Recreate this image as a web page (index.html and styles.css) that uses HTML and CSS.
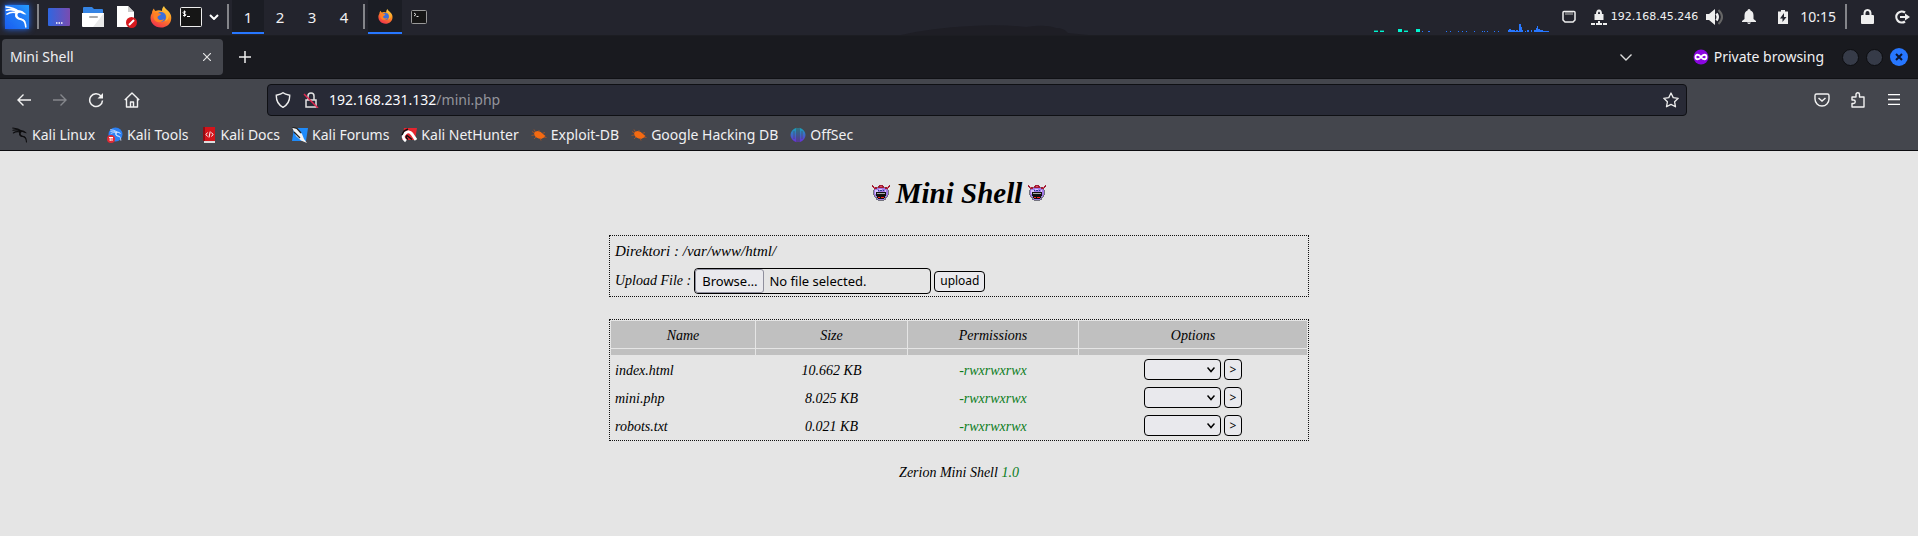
FILE: index.html
```
<!DOCTYPE html>
<html lang="en">
<head>
<meta charset="utf-8">
<title>Mini Shell</title>
<link rel="stylesheet" href="styles.css">
</head>
<body>
<svg class="defs" aria-hidden="true">
  <defs>
    <linearGradient id="gKali" x1="0" y1="1" x2="1" y2="0"><stop offset="0" stop-color="#1a5cf0"/><stop offset="1" stop-color="#259cff"/></linearGradient>
    <linearGradient id="gDesk" x1="0" y1="0" x2="1" y2="0"><stop offset="0" stop-color="#2f66e0"/><stop offset="1" stop-color="#7a4cb0"/></linearGradient>
    <linearGradient id="gFox" x1="0.8" y1="0" x2="0.3" y2="1"><stop offset="0" stop-color="#ffe14a"/><stop offset=".45" stop-color="#ff8a20"/><stop offset="1" stop-color="#f0304e"/></linearGradient>
    <linearGradient id="gOff" x1="0" y1="0" x2="0" y2="1"><stop offset="0" stop-color="#16a5b8"/><stop offset="1" stop-color="#6a2bd8"/></linearGradient>
    <symbol id="dragon" viewBox="0 0 24 24">
      <path d="M1 1.500C6 2 10 2.500 14 6M1.500 5c4-1.200 8-.800 11 1.500M2 9c3-2 6.500-2.500 10-1.500M12 8c-2 4 1 6 4 6.300 4 .500 5.500 3.200 5.700 8.200" fill="none" stroke="currentColor" stroke-width="1.600" stroke-linecap="round"/>
      <path d="M11 5.500c3-1 6-.500 8 1l3.500 3-3-.500-3-1.300c-2.500-.200-3.500.800-3.500 2.300 0 2 2 3 4.500 3.500 2.500.700 4 2.500 4.300 5-2-3-3.500-3.300-6-3.800-3.500-.700-5.500-3-5-5.700z" fill="currentColor"/>
    </symbol>
    <symbol id="fox" viewBox="0 0 22 22">
      <path d="M2 7C2 5 3 3.500 4 2.500c0 1.300.800 1.800 1.500 2.500C7.500 4 10 4 12 5c0-2 .500-3.500 2-5 .500 3 5.500 4.500 7 9.500 1.500 7-3.500 12-10 12S.500 17 .500 11.500C.500 10 1 8.500 2 7z" fill="url(#gFox)"/>
      <circle cx="11" cy="11" r="5" fill="#3a6fdc"/>
      <path d="M4 8c2-1.500 5-1.500 7 0-1 2-3.500 1.500-3.500 3.500 0 2.500 4 3.500 6.500 1.500-1 4-8 4.500-10 0C3.300 11.500 3.300 9.500 4 8z" fill="#ff8124"/>
      <path d="M12 5c3 0 4.500 3 4.500 6 0 2-1 3.500-2 4.500 4-1 5.500-6 3-9C16 4 13 5 12 5z" fill="#ffb52e"/>
    </symbol>
    <symbol id="bug" viewBox="0 0 16 16">
      <path d="M3 6q1-2 4-2 3 .500 5 3l2.500 2-1.500 1.500-3 1.500Q5 11 3.500 8.500z" fill="#f36a12"/>
      <path d="M4.500 5L3 2.500M8 5V3M3 8L.5 8.500M5 10l-2 2M9 11l1 2.500M11 6.500l3-1M3.500 6L1 4.500M13 10l2.500.5" fill="none" stroke="#b5541f" stroke-width=".8"/>
    </symbol>
    <symbol id="imp" viewBox="0 0 18 16" shape-rendering="crispEdges">
      <path d="M4 2h10v1h1v1h1v1h1v5h-1v2h-1v1h-1v2h-2v1H6v-1H4v-2H3v-1H2v-2H1V5h1V4h1V3h1z" fill="#74747e"/>
      <path d="M5 3h8v1h2v1h1v5h-1v2h-2v2h-1v1H6v-1H5v-2H3v-2H2V5h1V4h2z" fill="#a27ae6"/>
      <path d="M3 5h3v2H5v2H3zM7 4h3v1H7zM13 5h1v2h-1z" fill="#d8c6ff"/>
      <path d="M0 0h1v1h1v1h3v2H2V3H1V2H0zM18 0h-1v1h-1v1h-3v2h3V3h1V2h1zM7 0h4v1h1v2H6V1h1z" fill="#a01c34"/>
      <path d="M2 2h1v1H2zM15 2h1v1h-1zM8 1h2v1H8z" fill="#e04c66"/>
      <path d="M6 5h1v1H6zM8 5h2v1H8zM11 5h1v1h-1z" fill="#283c98"/>
      <path d="M4 7h10v4h-1v2h-1v1H6v-1H5v-2H4z" fill="#111"/>
      <path d="M5 8h8v1H5z" fill="#aaa"/><path d="M6 12h2v1H6zM9 12h3v1H9z" fill="#f22"/>
    </symbol>
  </defs>
</svg>

<header class="panel">
  <svg class="hill" width="190" height="10"><path d="M0 10Q30 3 70 1q30-2 55 1 20-3 30 1 8 0 12 5l20 2z" fill="#1e1e25"/></svg>
  <button class="menu" aria-label="Applications"><svg width="26" height="26" viewBox="0 0 26 26"><rect x="1" y="1" width="24" height="24" fill="url(#gKali)"/><svg x="1" y="1" width="23" height="24" color="#fff"><use href="#dragon"/></svg></svg></button>
  <span class="sep"></span>
  <button class="launch" aria-label="Show desktop"><svg width="22" height="18"><rect width="22" height="18" rx="1" fill="url(#gDesk)"/><path d="M8 15h1.500M10.500 15H12M13 15h1.500" stroke="#fff" stroke-width="1.500"/></svg></button>
  <button class="launch" aria-label="Files"><svg width="22" height="20"><path d="M1 1q0-1 1-1h8l2 2h8q1 0 1 1v4H1z" fill="#3584e4"/><path d="M0 6h22v13q0 1-1 1H1q-1 0-1-1z" fill="#fff"/><path d="M22 6v14H11z" fill="#e9e9e9"/><rect x="7" y="9" width="9" height="2" rx="1" fill="#aaa"/></svg></button>
  <button class="launch" aria-label="Text editor"><svg width="22" height="22"><path d="M1 0h11l6 6v15H1z" fill="#fff"/><path d="M12 0l6 6h-6z" fill="#ccc"/><circle cx="15.500" cy="16.500" r="5.500" fill="#d7191e"/><path d="M13 19l5-5" stroke="#fff" stroke-width="2"/></svg></button>
  <button class="launch" aria-label="Firefox"><svg width="22" height="22"><use href="#fox"/></svg></button>
  <button class="term" aria-label="Terminal"><svg width="22" height="20"><rect x=".5" y=".5" width="21" height="19" rx="1" fill="#161616" stroke="#eee"/><path d="M6 5q-3-1-3 .7c0 1.300 3 .8 3 2.300q-.5 1.300-3 .5M4.500 3.500v6M7 9.500h3" fill="none" stroke="#fff"/></svg></button>
  <button class="more" aria-label="More terminals"><svg width="10" height="6"><path d="M1 1l4 4 4-4" fill="none" stroke="#fff" stroke-width="2"/></svg></button>
  <span class="sep"></span>
  <nav class="spaces"><button class="space on">1</button><button class="space">2</button><button class="space">3</button><button class="space">4</button></nav>
  <span class="sep"></span>
  <button class="task on" aria-label="Firefox window"><svg width="15" height="15"><use href="#fox"/></svg></button>
  <button class="task" aria-label="Terminal window"><svg width="16" height="14"><rect x=".5" y=".5" width="15" height="13" rx="1" fill="#161616" stroke="#999"/><path d="M3 3l2 1.500L3 6M5.500 6.500h2" fill="none" stroke="#ddd"/></svg></button>
  <svg class="graph" width="178" height="9" shape-rendering="crispEdges"><path d="M0 7h4v1H0zM6 7h4v1H6zM24 5h4v3h-4zM30 7h4v1h-4zM42 5h4v3h-4z" fill="#00f5d0"/><path d="M0 6h4v1H0zM6 6h4v1H6zM30 6h4v1h-4z" fill="#14786f"/><path d="M48 7h1v1h-1zM54 7h2v1h-2zM72 7h1v1h-1zM76 7h1v1h-1zM84 7h1v1h-1zM88 7h1v1h-1zM92 7h1v1h-1zM100 7h1v1h-1zM108 7h1v1h-1zM110 7h1v1h-1zM113 7h1v1h-1zM120 7h1v1h-1zM124 7h1v1h-1zM134 6h1V5h2v1h4v1h1V6h2v1h1V0h2v3h1v3h1v2h-15zM151 7h1v1h-1zM153 6h2v2h-2zM157 6h1v2h-1zM160 6h2V4h1V2h1v3h2v1h3v1h6v1h-15z" fill="#2777ff"/></svg>
  <div class="tray">
    <svg class="net" width="14" height="14"><path d="M2 1.500h10q1 0 1 1V10l-2 2H3l-2-2V2.500q0-1 1-1z" fill="none" stroke="#eee" stroke-width="1.500"/><path d="M4 2v3M6 2v3M8 2v3M10 2v3" stroke="#bbb"/></svg>
    <svg width="16" height="16"><path d="M5 5q0-4.500 3-4.500T11 5h1.500v6h-9V5zM7 5h2q0-2.500-1-2.500T7 5z" fill="#eee"/><path d="M0 14h4v2H0zM5 14h6v2H5zM12 14h4v2h-4zM7 12h2v2H7z" fill="#eee"/></svg>
    <span class="ip">192.168.45.246</span>
    <svg class="vol" width="18" height="16"><path d="M0 5h3l6-5v16l-6-5H0z" fill="#eee"/><path d="M10.500 4.500Q13 8 10.500 11.500" fill="none" stroke="#eee" stroke-width="2.500"/><path d="M12.500 1q7 7 0 14" fill="none" stroke="#666" stroke-width="2"/></svg>
    <svg class="bell" width="14" height="15"><path d="M7 0q1.500 0 1.500 1.500 3 1 3 5V10L14 12v1H0v-1l2.500-2V6.500q0-4 3-5Q5.500 0 7 0zM5 13.500h4Q8 15 7 15t-2-1.500z" fill="#eee"/></svg>
    <svg class="batt" width="10" height="14"><path d="M3 0h4v1.500h3V14H0V1.500h3z" fill="#eee"/><path d="M6 3L2 8.500h2.500V12L8.500 7H6z" fill="#23252e"/></svg>
    <time class="clock">10:15</time>
    <span class="sep"></span>
    <svg class="lock" width="13" height="15"><path d="M1 6h1.500q-.5-6 4-6t4 6H12q1 0 1 1v7q0 1-1 1H1q-1 0-1-1V7q0-1 1-1zM4.500 6h4q.300-4-2-4t-2 4z" fill="#eee"/></svg>
    <svg class="exit" width="15" height="14"><path d="M10 2.500A5.500 5.500 0 1 0 10 11.500" fill="none" stroke="#eee" stroke-width="2.200"/><path d="M5 6h5V3.500L15 7l-5 3.500V8H5z" fill="#eee"/></svg>
  </div>
</header>

<div class="tabs">
  <div class="tab"><span>Mini Shell</span><button aria-label="Close tab"><svg width="8" height="8"><path d="M0 0l8 8M8 0L0 8" stroke="#e4e4e4" stroke-width="1.200"/></svg></button></div>
  <button class="new" aria-label="New tab"><svg width="12" height="12"><path d="M6 0v12M0 6h12" stroke="#eee" stroke-width="1.500"/></svg></button>
  <button class="all" aria-label="List tabs"><svg width="12" height="7"><path d="M.5.500L6 6l5.500-5.500" fill="none" stroke="#ddd" stroke-width="1.400"/></svg></button>
  <div class="private"><svg width="16" height="16"><circle cx="8" cy="8" r="7.500" fill="#8a06e0"/><path d="M8 8C6 5 2.500 5 2.500 8S6 11 8 8s5.500-3 5.500 0S10 11 8 8z" fill="none" stroke="#fff" stroke-width="1.800"/></svg><span>Private browsing</span></div>
  <div class="win"><button aria-label="Minimize"></button><button aria-label="Maximize"></button><button class="x" aria-label="Close"><svg width="8" height="8"><path d="M1 1l6 6M7 1L1 7" stroke="#0a1430" stroke-width="2"/></svg></button></div>
</div>

<div class="nav">
  <div class="tools">
    <button aria-label="Back"><svg width="16" height="16"><path d="M15 8H2M7.500 2.500L2 8l5.500 5.500" fill="none" stroke="#f2f2f2" stroke-width="1.400"/></svg></button>
    <button aria-label="Forward"><svg width="16" height="16"><path d="M1 8h13M8.500 2.500L14 8l-5.500 5.500" fill="none" stroke="#85878c" stroke-width="1.400"/></svg></button>
    <button aria-label="Reload"><svg width="16" height="16"><path d="M13 4A6.400 6.400 0 1 0 14.500 8.500" fill="none" stroke="#f2f2f2" stroke-width="1.500"/><path d="M15 1v5.500H9.500z" fill="#f2f2f2"/></svg></button>
    <button aria-label="Home"><svg width="16" height="16"><path d="M.8 8L8 1l7.200 7M2.500 6.500V15h11V6.500M6.500 15v-5h3v5" fill="none" stroke="#f2f2f2" stroke-width="1.400" stroke-linejoin="round"/></svg></button>
  </div>
  <div class="url">
    <svg width="16" height="16"><path d="M8 .7Q10 2.300 14.700 3.200 15 11.500 8 15.300 1 11.500 1.300 3.200 6 2.300 8 .7z" fill="none" stroke="#eee" stroke-width="1.400"/></svg>
    <svg class="insecure" width="16" height="16"><path d="M3 8h10v7H3zM5 8V4q0-3 3-3t3 3v4" fill="none" stroke="#e2e2e2" stroke-width="1.500"/><path d="M1 2l14 14" stroke="#e22850" stroke-width="1.500"/></svg>
    <a class="addr" href="#"><b>192.168.231.132</b>/mini.php</a>
    <button aria-label="Bookmark"><svg width="16" height="16"><path d="M8 1l2.200 4.600 5 .7-3.600 3.500.9 5L8 12.400l-4.500 2.400.9-5L.8 6.300l5-.7z" fill="none" stroke="#eee" stroke-width="1.300" stroke-linejoin="round"/></svg></button>
  </div>
  <div class="tools">
    <button aria-label="Pocket"><svg width="16" height="16"><path d="M2.500 2h11q1.500 0 1.500 1.500V7A7 7 0 0 1 1 7V3.500Q1 2 2.500 2z" fill="none" stroke="#f2f2f2" stroke-width="1.400"/><path d="M4.500 6L8 9l3.500-3" fill="none" stroke="#f2f2f2" stroke-width="1.500"/></svg></button>
    <button aria-label="Extensions"><svg width="16" height="16"><path d="M2 15V11.500h1.500a1.500 1.500 0 0 0 0-3.500H2V5h4V2.500a1.500 1.500 0 0 1 3.500 0V5H14v10z" fill="none" stroke="#f2f2f2" stroke-width="1.400" stroke-linejoin="round"/></svg></button>
    <button aria-label="Menu"><svg width="12" height="11"><path d="M0 .5h12M0 5.500h12M0 10.500h12" stroke="#fff" stroke-width="1.300"/></svg></button>
  </div>
</div>

<nav class="marks">
  <a href="#"><svg width="16" height="16" color="#0d0d0f"><use href="#dragon"/></svg>Kali Linux</a>
  <a href="#"><svg width="16" height="16"><circle cx="8.500" cy="7.500" r="7" fill="#2b80f4"/><svg x="3" y="2" width="12" height="12" color="#cfe2ff"><use href="#dragon"/></svg><circle cx="4" cy="12" r="4" fill="#e02a34"/><path d="M2 10.500h4M3.200 10.500v3.500M5 10.500v3.500" stroke="#fff"/></svg>Kali Tools</a>
  <a href="#"><svg width="16" height="16"><path d="M2 0h12v14H2z" fill="#d4141b"/><path d="M2 0h2v14H2z" fill="#8f0e14"/><path d="M3 14h11v2H3z" fill="#ddd"/><path d="M6.500 5.500L5 7.500l1.500 2M10.500 5.500l1.500 2-1.500 2M9.200 4.500L8 10.500" fill="none" stroke="#fff"/></svg>Kali Docs</a>
  <a href="#"><svg width="16" height="16"><path d="M2 1h14l-2 13H0z" fill="#1f8bfa"/><path d="M0 0l5 1.500 5 5.500 2 5 3 4-6-2.500-5-4.500z" fill="#f4f4f4"/><path d="M0 0l5 1.500L9 6M2 5l6 6" fill="none" stroke="#222" stroke-width="1.300"/></svg>Kali Forums</a>
  <a href="#"><svg width="16" height="16"><path d="M3 1h13l-2 12H1z" fill="#e5252f"/><path d="M5 14Q0 10 4 6.500T11 7l4 6" fill="none" stroke="#fff" stroke-width="3"/><path d="M7 12.500q-3-2-1-4l5 4M1 8l2-4 4-2" fill="none" stroke="#111" stroke-width="1.500"/></svg>Kali NetHunter</a>
  <a href="#"><svg width="16" height="16"><use href="#bug"/></svg>Exploit-DB</a>
  <a href="#"><svg width="16" height="16"><use href="#bug"/></svg>Google Hacking DB</a>
  <a href="#"><svg width="16" height="16"><path d="M6.500.8v14.400Q.5 13 .5 8t6-7.200zM9.500.8v14.400q6-2.200 6-7.200t-6-7.200zM7.500 1h1v14h-1z" fill="url(#gOff)"/><path d="M4 4v8M12 4v8" stroke="#45474e" stroke-width=".6"/></svg>OffSec</a>
</nav>

<main class="page">
  <h1><svg width="18" height="16"><use href="#imp"/></svg><span>Mini Shell</span><svg width="18" height="16"><use href="#imp"/></svg></h1>
  <section class="box info">
    <p>Direktori : /var/www/html/</p>
    <form class="upload">
      <span>Upload File :</span>
      <label class="file"><input type="file"><span class="browse">Browse…</span><span>No file selected.</span></label>
      <button type="button">upload</button>
    </form>
  </section>
  <table class="box files">
    <colgroup><col class="c1"><col class="c2"><col class="c3"><col class="c4"></colgroup>
    <thead>
      <tr><th>Name</th><th>Size</th><th>Permissions</th><th>Options</th></tr>
      <tr class="thin"><td></td><td></td><td></td><td></td></tr>
    </thead>
    <tbody>
      <tr><td>index.html</td><td>10.662 KB</td><td class="perm">-rwxrwxrwx</td><td><div class="opt"><select aria-label="Action for index.html"><option></option></select><button>&gt;</button></div></td></tr>
      <tr><td>mini.php</td><td>8.025 KB</td><td class="perm">-rwxrwxrwx</td><td><div class="opt"><select aria-label="Action for mini.php"><option></option></select><button>&gt;</button></div></td></tr>
      <tr><td>robots.txt</td><td>0.021 KB</td><td class="perm">-rwxrwxrwx</td><td><div class="opt"><select aria-label="Action for robots.txt"><option></option></select><button>&gt;</button></div></td></tr>
    </tbody>
  </table>
  <footer>Zerion Mini Shell <span>1.0</span></footer>
</main>
</body>
</html>
```
FILE: styles.css
```
* { box-sizing: border-box; }
body {
  margin: 0;
  min-height: 100vh;
  display: flex;
  flex-direction: column;
  background: #e5e5e5;
  font: 14px/20px "Noto Sans", sans-serif;
  color: #f0f0f2;
}
button { font: inherit; color: inherit; background: none; border: 0; padding: 0; }
a { color: inherit; text-decoration: none; }
svg { flex: none; display: block; }
.defs { position: absolute; width: 0; height: 0; }

.panel { position: relative; display: flex; align-items: center; height: 36px; padding-bottom: 2px; background: #23242d; border-bottom: 1px solid #1c1d22; }
.hill { position: absolute; left: 47%; bottom: 0; }
.panel button { display: flex; align-items: center; justify-content: center; height: 34px; }
.sep { width: 2px; height: 25px; background: #84858a; margin: 0 3px; }
.panel .menu { width: 34px; }
.menu svg { filter: drop-shadow(0 0 3px #2468f0); }
.panel .launch { width: 34px; }
.panel .term { width: 26px; }
.panel .more { width: 20px; }
.spaces { display: flex; }
.panel .space { width: 32px; font-size: 15px; }
.panel .task { width: 34px; }
.panel .on { background: #1b1d24; border-bottom: 2px solid #2777ff; padding-top: 2px; }
.graph { margin-left: auto; align-self: flex-end; }
.tray { display: flex; align-items: center; padding: 0 8px 0 10px; }
.net { margin-right: 15px; }
.ip { font: 11px/16px "DejaVu Sans", sans-serif; margin: 0 8px 0 4px; }
.bell { margin: 0 22px 0 18px; }
.clock { margin: 0 6px 0 12px; font-size: 14px; }
.lock { margin: 0 21px 0 11px; }

.tabs { display: flex; align-items: center; height: 43px; padding: 0 10px 0 2px; background: #191a1f; border-bottom: 1px solid #101115; }
.tab { display: flex; align-items: center; justify-content: space-between; width: 221px; height: 36px; padding: 0 12px 0 8px; border-radius: 4px; background: #44464d; }
.new { margin-left: 16px; }
.all { margin-left: auto; }
.private { display: flex; align-items: center; gap: 5px; margin: 0 18px 0 61px; }
.win { display: flex; align-items: center; gap: 7px; }
.win button { width: 17px; height: 17px; border-radius: 50%; background: #363b48; border: 1px solid #0c0d10; }
.win .x { display: flex; align-items: center; justify-content: center; width: 18px; height: 18px; background: #2777ff; border: 0; }

.nav { display: flex; align-items: center; height: 41px; padding: 0 6px; background: #44464d; }
.tools { display: flex; }
.tools button { display: flex; align-items: center; justify-content: center; width: 36px; height: 32px; }
.url { display: flex; align-items: center; flex: 1; height: 32px; margin: 0 117px; padding: 0 7px; border: 1px solid #0f1014; border-radius: 4px; background: #282a36; }
.insecure { margin: 0 10px 0 12px; }
.addr { flex: 1; color: #94959c; }
.addr b { font-weight: 400; color: #fbfbfe; }

.marks { display: flex; align-items: center; gap: 12px; height: 31px; padding: 0 12px; background: #44464d; border-bottom: 1px solid #0c0c10; }
.marks a { display: flex; align-items: center; gap: 4px; }

.page { flex: 1; color: #000; font: italic 14px/20px "Monotype Corsiva", "Z003", "URW Chancery L", "Liberation Serif", serif; text-align: center; }
.page h1 { display: flex; justify-content: center; align-items: center; gap: 6px; margin: 24px 0; font-size: 29px; line-height: 36px; font-weight: 700; }
.box { width: 700px; max-width: 100%; margin: 0 auto 22px; border: 1px dotted #111; }
.info { padding: 4px 5px 2px; text-align: left; }
.info p { margin: 0; font-size: 15px; line-height: 22px; }
.upload { display: flex; align-items: center; gap: 3px; padding-top: 6px; }
.file { position: relative; display: flex; align-items: center; gap: 5px; width: 237px; height: 26px; border: 1px solid #000; border-radius: 4px; font: 13px/20px "Noto Sans", sans-serif; }
.file input { position: absolute; inset: 0; opacity: 0; }
.browse { height: 24px; padding: 1px 6px; border: 1px solid #8f8f9d; border-radius: 3px; background: #e9e9ed; }
.page button, .page select { height: 21px; border: 1px solid #000; border-radius: 4px; background: #e9e9ed; color: #000; font: 12px/18px "Noto Sans", sans-serif; }
.upload button { padding: 0 5px; }

.files { border-collapse: separate; border-spacing: 1px; table-layout: fixed; }
.c1 { width: 144px; }
.c2 { width: 151px; }
.c3 { width: 170px; }
.files th { height: 27px; padding: 2px 0 0; background: #c0c0c0; font-weight: 400; }
.files td { height: 27px; padding: 2px 0 0; }
.files td:last-child { padding: 0; }
.files .thin td { height: 6px; padding: 0; background: #c0c0c0; }
.files tbody td:first-child { text-align: left; padding-left: 4px; }
.files .perm { color: #0a7d1c; }
.opt { display: flex; justify-content: center; gap: 3px; }
.page select { width: 77px; appearance: none; background: #e9e9ed url("data:image/svg+xml,%3Csvg xmlns='http://www.w3.org/2000/svg' width='8' height='6'%3E%3Cpath d='M.5 .5L4 4.500 7.500 .5' fill='none' stroke='%23000' stroke-width='1.500'/%3E%3C/svg%3E") no-repeat right 5px center; }
.opt button { width: 18px; }
footer span { color: #0a7d1c; }
```
